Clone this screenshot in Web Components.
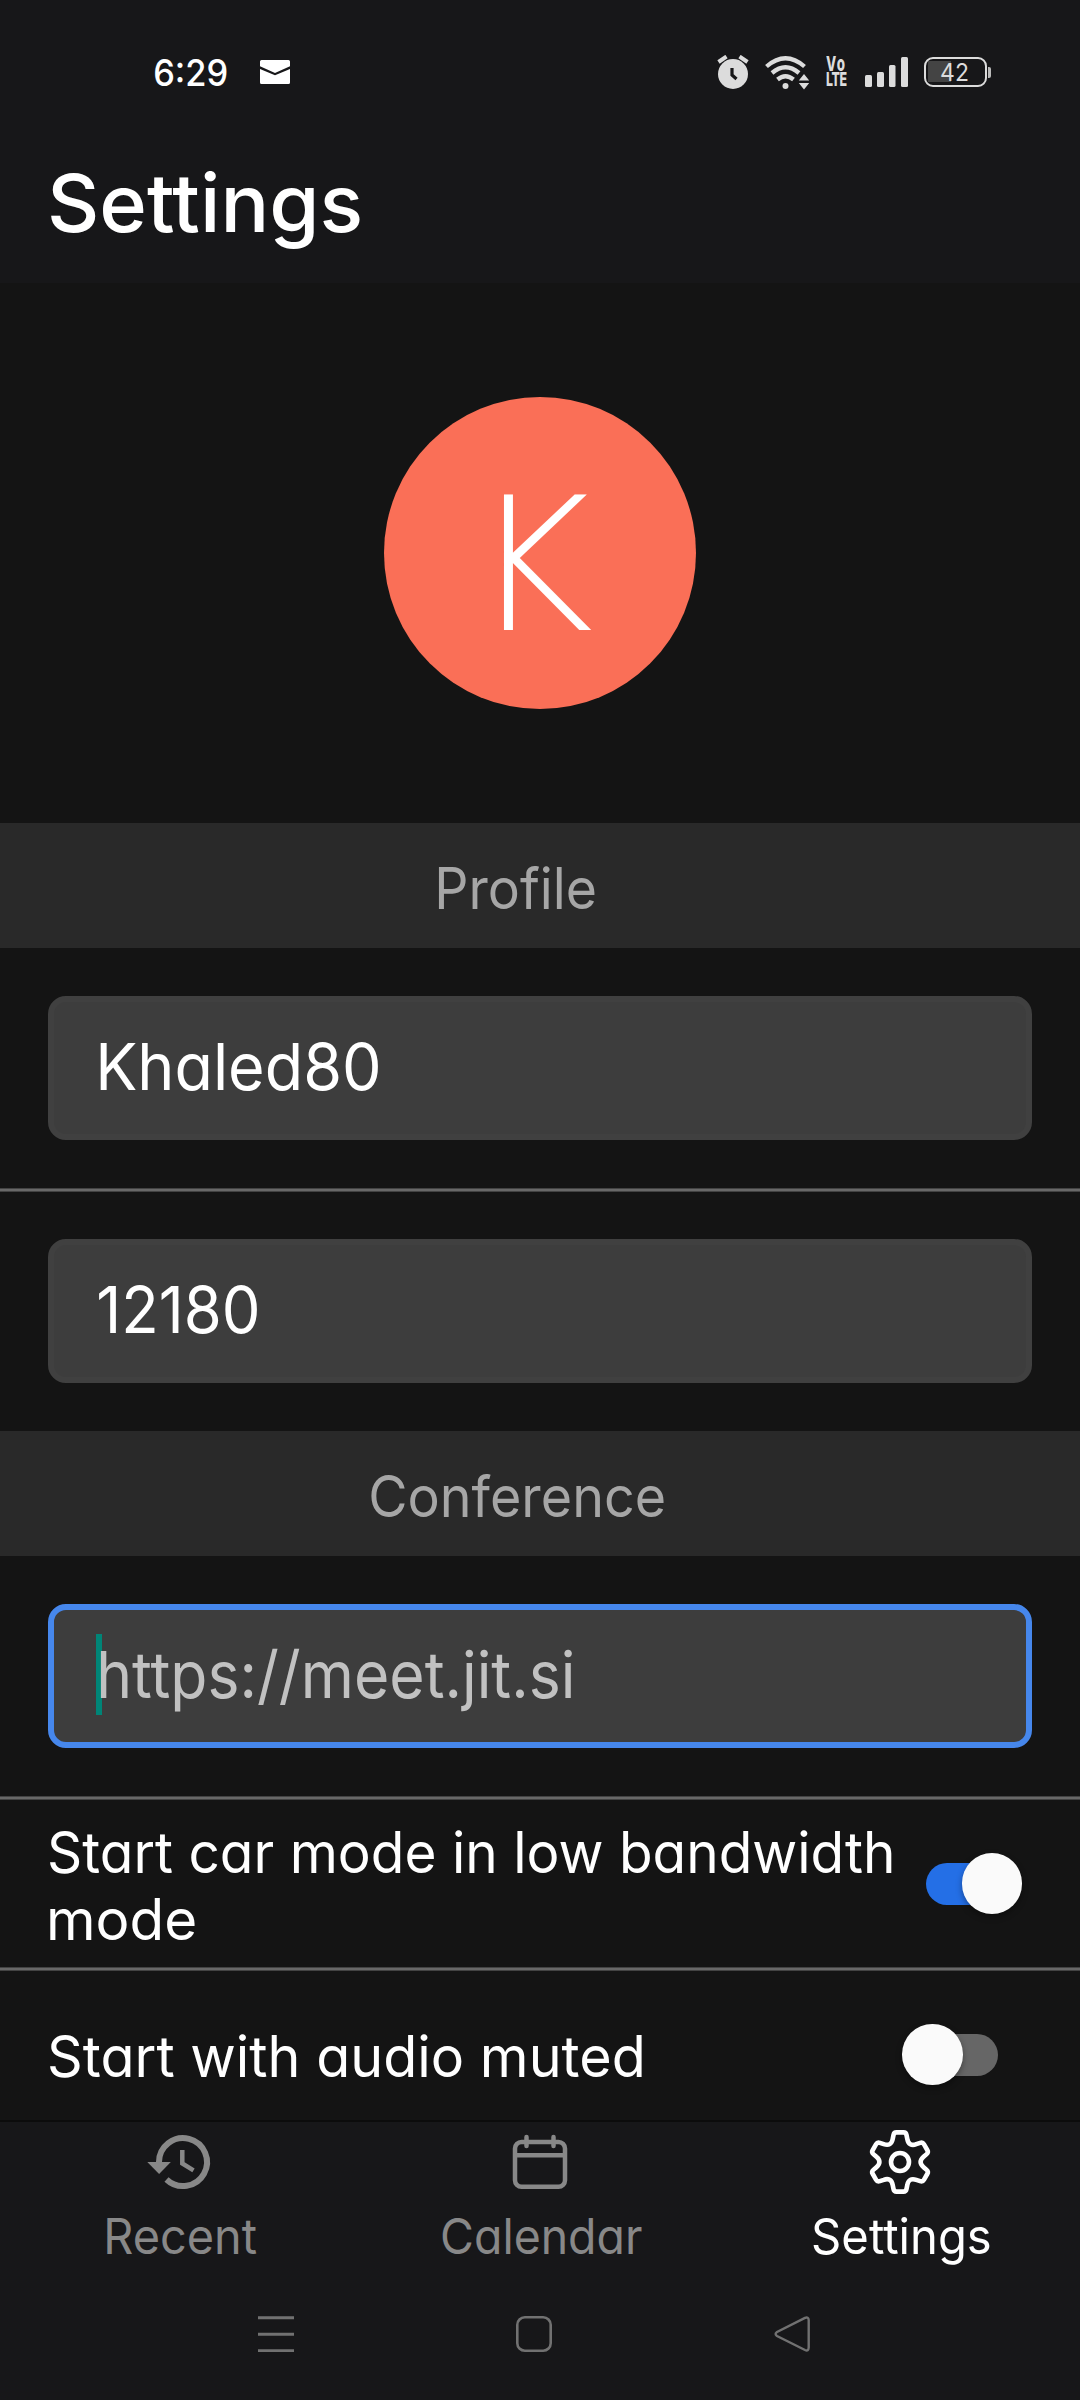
<!DOCTYPE html>
<html lang="en">
<head>
<meta charset="utf-8">
<title>Settings</title>
<style>
html,body{margin:0;padding:0;background:#141414}
body{font-family:Inter,Roboto,"Liberation Sans",sans-serif;color:#fff}
</style>
</head>
<body>
<settings-screen></settings-screen>
<script>
const define=(name,html,setup)=>customElements.define(name,class extends HTMLElement{
  constructor(){super();this.attachShadow({mode:'open'});}
  connectedCallback(){this.shadowRoot.innerHTML=typeof html==='function'?html(this):html;if(setup)setup(this);}
});

/* A single line whose ink starts at the box's left edge and spans `w` pixels. */
const canvas=document.createElement('canvas').getContext('2d');
define('fit-text',el=>`<style>
:host{display:block;flex:none;width:${el.getAttribute('w')}px;height:${el.getAttribute('size')}px}
span{display:inline-block;white-space:pre;transform-origin:0 50%;font-family:${el.getAttribute('face')||'Inter'},Roboto,sans-serif;font-size:${el.getAttribute('size')}px;line-height:${el.getAttribute('size')}px;font-weight:${el.getAttribute('weight')||400};font-feature-settings:"cv11"}
</style><span>${el.getAttribute('text')}</span>`,el=>{
  const s=el.shadowRoot.querySelector('span');
  canvas.font=`${el.getAttribute('weight')||400} ${el.getAttribute('size')}px ${el.getAttribute('face')||'Inter'}`;
  const m=canvas.measureText(s.textContent);
  const l=-m.actualBoundingBoxLeft,r=m.width-m.actualBoundingBoxRight;
  const k=el.getAttribute('w')/(s.getBoundingClientRect().width-l-r);
  s.style.transform=`translateX(${1-l*k}px) scaleX(${k})`;
});

define('status-bar',`<style>
:host{display:flex;align-items:center;height:144px;box-sizing:border-box;padding:0 89px 0 154px}
.left,.right{display:flex;align-items:center}
.right{margin-left:auto}
svg{display:block;flex:none}
.volte{width:36px;margin:-1px 3px 0 17px;color:#dcdcdc;font-size:19px;line-height:15.500px;font-weight:800;letter-spacing:-.6px;transform:scaleX(.65);transform-origin:0 50%}
.volte::first-line{font-size:20.500px;letter-spacing:2px}
.battery{display:flex;align-items:center;margin-left:16px}
.cell{width:63px;height:30px;box-sizing:border-box;border:2.5px solid #dcdcdc;border-radius:9px;display:flex;align-items:center;padding:1px 0 0 14px;color:#dcdcdc;background:linear-gradient(#444,#444) 2px 2px/23px 21px no-repeat}
.nub{width:3px;height:11px;background:#bbb;border-radius:0 2px 2px 0;margin-left:1px}
</style>
<div class="left"><fit-text size="37" w="72" weight="500" text="6:29"></fit-text>
<svg style="margin-left:34px" width="30" height="24" viewBox="0 0 30 24"><path fill="#fff" d="M1.5 0h27Q30 0 30 1.5V6.2L15 13 0 6.2V1.500Q0 0 1.500 0ZM0 9l15 6.200L30 9v13.500q0 1.500-1.500 1.500h-27Q0 24 0 22.500Z"/></svg></div>
<div class="right">
<svg width="33" height="35" viewBox="717 55 33 35"><circle cx="733" cy="74" r="15" fill="#dcdcdc"/><path d="M732 68v7l4.500 4" fill="none" stroke="#171719" stroke-width="3.200"/><path d="M718.500 62l8-5.500M747.500 62l-8-5.500" stroke="#dcdcdc" stroke-width="4"/></svg>
<svg style="margin-left:15px" width="44" height="35" viewBox="765 54 44 35"><g fill="none" stroke="#dcdcdc" stroke-width="4.300"><path d="M766.500 65.500Q785.500 49 804.500 65.500"/><path d="M772 72Q785.500 60.500 799 72"/><path d="M777.500 78.500Q785.500 72 793.500 78.500"/></g><circle cx="785.500" cy="85" r="3" fill="#dcdcdc"/><path fill="#dcdcdc" d="M804 73l5.200 6.500h-10.400zM804 88.500l5.200-6.500h-10.400z"/></svg>
<div class="volte">Vo LTE</div>
<svg width="43" height="30" viewBox="865 57 43 30" fill="#dcdcdc"><rect x="865" y="75" width="7" height="12" rx="1.500"/><rect x="877" y="72" width="7" height="15" rx="1.500"/><rect x="889" y="65" width="6.500" height="22" rx="1.500"/><rect x="901" y="57" width="7" height="30" rx="1.500"/></svg>
<div class="battery"><div class="cell"><fit-text size="24.500" w="27" text="42"></fit-text></div><div class="nub"></div></div>
</div>`);

define('page-header',`<style>
:host{display:block;height:283px;background:#171719}
.title{display:flex;align-items:center;height:118px;padding-left:49.500px}
</style><status-bar></status-bar><div class="title"><fit-text size="80" w="309" weight="550" text="Settings"></fit-text></div>`);

define('user-avatar',el=>`<style>
:host{display:flex;justify-content:center;align-items:center;height:540px}
.disc{width:312px;height:312px;border-radius:50%;background:#fa6f57;display:flex;align-items:center;box-sizing:border-box;padding:26px 0 0 118px}
</style><div class="disc"><fit-text size="185" w="89" weight="200" face="DejaVu Sans Light,DejaVu Sans" text="${el.getAttribute('letter')}"></fit-text></div>`);

define('section-band',`<style>
:host{display:flex;align-items:center;justify-content:center;height:125px;box-sizing:border-box;background:#292929;color:#a6a6a6;padding:5px 48px 0 0}
</style><slot></slot>`);

define('text-field',`<style>
:host{display:flex;align-items:center;height:144px;box-sizing:border-box;margin:48px;border:6px solid #404040;border-radius:18px;background:#3d3d3d;padding:0 0 2px 45px}
:host([focused]){border-color:#4687ec;color:#c1c1c1;position:relative}
i{display:none}
:host([focused]) i{display:block;position:absolute;left:42px;top:24px;width:6px;height:81px;background:#008577}
slot{position:relative;display:block}
</style><i></i><slot></slot>`);

define('row-divider',`<style>:host{display:block;height:4px;background:linear-gradient(#434343 1px,#686868 1px 3px,#434343 3px)}</style>`);

define('toggle-switch',`<style>
:host{display:flex;align-items:center;width:96px;height:61px;flex:none}
.track{width:84px;height:42px;border-radius:21px;background:#666;display:flex;align-items:center;margin-left:12px}
.thumb{width:60.500px;height:60.500px;border-radius:50%;background:#fafafa;flex:none;margin-left:-12px;box-shadow:0 3px 6px rgba(0,0,0,.35)}
:host([on]) .track{margin-left:0;background:#246fe6}
:host([on]) .thumb{margin-left:35.500px}
</style><div class="track"><div class="thumb"></div></div>`);

define('setting-row',`<style>
:host{display:flex;align-items:center;box-sizing:border-box;padding-left:49px}
.label{display:flex;flex-direction:column;gap:10px;flex:1;padding-top:4px}
</style><div class="label"><slot></slot></div><slot name="control"></slot>`);

const gear=()=>{
  const rot=(x,y,a)=>{const c=Math.cos(a),s=Math.sin(a);return (x*c-y*s).toFixed(2)+' '+(x*s+y*c).toFixed(2);};
  let d='';
  for(let i=0;i<6;i++){
    const a=i*Math.PI/3,p=(x,y)=>rot(x,y,a);
    d+=(i?'L':'M')+p(-6.500,-27)+'Q'+p(-6,-29.600)+' '+p(-3.500,-29.600)+'L'+p(3.500,-29.600)+'Q'+p(6,-29.600)+' '+p(6.500,-27)+'L'+p(7.300,-23)+'C'+p(8.300,-17.800)+' '+p(11.500,-16)+' '+rot(-7.300,-23,a+Math.PI/3);
  }
  return d+'Z';
};
const icons={
  recent:`<path d="M159 2163V2162A24 24 0 1 1 166.500 2179.500" fill="none" stroke="currentColor" stroke-width="6"/><path d="M147.300 2162h23.500l-11.700 12z" fill="currentColor"/><path d="M182.300 2150v13.500l11.200 6.800" fill="none" stroke="currentColor" stroke-width="4.500"/>`,
  calendar:`<g fill="none" stroke="currentColor" stroke-width="4.500"><rect x="515" y="2142" width="50" height="44.800" rx="6.500"/><path d="M515 2155.300h50"/><path d="M526.500 2137v9M553.500 2137v9" stroke-linecap="round"/></g>`,
  settings:`<g transform="translate(900 2162)" fill="none" stroke="currentColor" stroke-width="4.600"><path d="${gear()}" stroke-linejoin="round"/><circle r="9"/></g>`
};
const boxes={recent:'144 2128 72 68',calendar:'504 2128 72 68',settings:'864 2128 72 68'};
define('tab-item',el=>`<style>
:host{display:flex;flex-direction:column;align-items:center;flex:1;color:#888;padding-top:6px}
:host([active]){color:#fff}
svg{display:block;width:72px;height:68px}
</style><svg viewBox="${boxes[el.getAttribute('icon')]}">${icons[el.getAttribute('icon')]}</svg><slot></slot>`);

define('tab-bar',`<style>
:host{display:flex;height:160px;box-sizing:border-box;background:#171719;border-top:2px solid #0c0c0c}
::slotted(*){min-width:0}
</style><slot></slot>`);

define('system-nav',`<style>
:host{display:flex;align-items:center;height:120px;background:#171719;padding:0 270px 0 258px;box-sizing:border-box;justify-content:space-between}
svg{display:block;margin-top:-12px}
</style>
<svg width="36" height="36"><path d="M0 1.700h36M0 18.200h36M0 34.700h36" stroke="#717171" stroke-width="3"/></svg>
<svg width="36" height="36"><rect x="1.300" y="1.300" width="33.400" height="33.400" rx="7.500" fill="none" stroke="#717171" stroke-width="2.600"/></svg>
<svg width="36" height="36"><path d="M31 1.900Q34.500.400 34.700 4V31.500Q34.500 35.600 31 34L3 20Q.200 18 3 16Z" fill="none" stroke="#717171" stroke-width="2.400"/></svg>`);

define('settings-screen',`<style>
:host{display:flex;flex-direction:column;width:1080px;height:2400px;overflow:hidden;background:#141414}
.body{flex:1;min-height:0;overflow:hidden}
.a{height:167px;padding-right:58px}
.b{height:167px;padding-right:82px}
.tabtext{margin-top:16px}
.shift{margin-left:2px}
.digits{margin-left:-1.5px}
</style>
<page-header></page-header>
<div class="body">
<user-avatar letter="K"></user-avatar>
<section-band><fit-text size="57" w="156" text="Profile"></fit-text></section-band>
<div style="display:flow-root"><text-field><fit-text size="64.500" w="278" text="Khaled80"></fit-text></text-field></div>
<row-divider></row-divider>
<div style="display:flow-root;margin-top:-1px"><text-field><fit-text class="digits" size="64.500" w="158" text="12180"></fit-text></text-field></div>
<section-band><fit-text size="57" w="293" text="Conference"></fit-text></section-band>
<div style="display:flow-root"><text-field focused><fit-text size="64.500" w="472" text="https://meet.jit.si"></fit-text></text-field></div>
<row-divider></row-divider>
<setting-row class="a"><fit-text size="57" w="842" text="Start car mode in low bandwidth"></fit-text><fit-text size="57" w="145" text="mode"></fit-text><toggle-switch slot="control" on></toggle-switch></setting-row>
<row-divider></row-divider>
<setting-row class="b"><fit-text size="57" w="592" text="Start with audio muted"></fit-text><toggle-switch slot="control"></toggle-switch></setting-row>
</div>
<tab-bar>
<tab-item icon="recent"><fit-text class="tabtext shift" size="49" w="150" text="Recent"></fit-text></tab-item>
<tab-item icon="calendar"><fit-text class="tabtext shift" size="49" w="200" text="Calendar"></fit-text></tab-item>
<tab-item icon="settings" active><fit-text class="tabtext" size="49" w="177" text="Settings"></fit-text></tab-item>
</tab-bar>
<system-nav></system-nav>`);
</script>
</body>
</html>
